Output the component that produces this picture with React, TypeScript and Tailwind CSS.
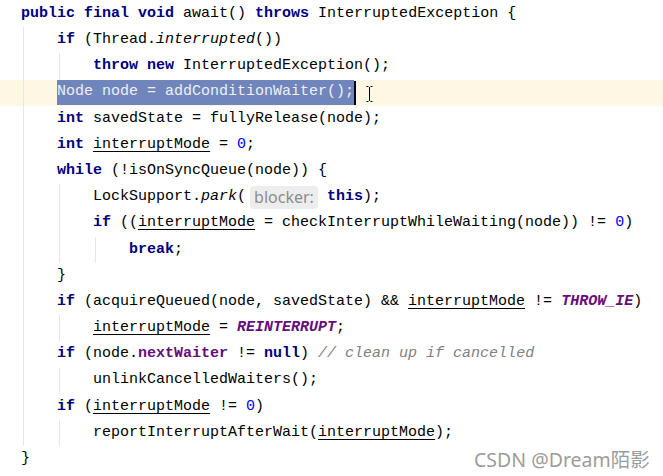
import React from "react";

type Seg = { t: string; k?: "kw" | "it" | "ul" | "num" | "const" | "field" | "cm" | "hint" | "sel" | "caret" };
type Line = { indent: number; segs: Seg[]; current?: boolean };

const kw = (t: string): Seg => ({ t, k: "kw" });
const p = (t: string): Seg => ({ t });
const it = (t: string): Seg => ({ t, k: "it" });
const ul = (t: string): Seg => ({ t, k: "ul" });
const num = (t: string): Seg => ({ t, k: "num" });
const cst = (t: string): Seg => ({ t, k: "const" });

const lines: Line[] = [
  { indent: 0, segs: [kw("public"), p(" "), kw("final"), p(" "), kw("void"), p(" await() "), kw("throws"), p(" InterruptedException {")] },
  { indent: 1, segs: [kw("if"), p(" (Thread."), it("interrupted"), p("())")] },
  { indent: 2, segs: [kw("throw"), p(" "), kw("new"), p(" InterruptedException();")] },
  { indent: 1, current: true, segs: [{ t: "Node node = addConditionWaiter();", k: "sel" }, { t: "", k: "caret" }] },
  { indent: 1, segs: [kw("int"), p(" savedState = fullyRelease(node);")] },
  { indent: 1, segs: [kw("int"), p(" "), ul("interruptMode"), p(" = "), num("0"), p(";")] },
  { indent: 1, segs: [kw("while"), p(" (!isOnSyncQueue(node)) {")] },
  { indent: 2, segs: [p("LockSupport."), it("park"), p("("), { t: "blocker:", k: "hint" }, p(" "), kw("this"), p(");")] },
  { indent: 2, segs: [kw("if"), p(" (("), ul("interruptMode"), p(" = checkInterruptWhileWaiting(node)) != "), num("0"), p(")")] },
  { indent: 3, segs: [kw("break"), p(";")] },
  { indent: 1, segs: [p("}")] },
  { indent: 1, segs: [kw("if"), p(" (acquireQueued(node, savedState) && "), ul("interruptMode"), p(" != "), cst("THROW_IE"), p(")")] },
  { indent: 2, segs: [ul("interruptMode"), p(" = "), cst("REINTERRUPT"), p(";")] },
  { indent: 1, segs: [kw("if"), p(" (node."), { t: "nextWaiter", k: "field" }, p(" != "), kw("null"), p(") "), { t: "// clean up if cancelled", k: "cm" }] },
  { indent: 2, segs: [p("unlinkCancelledWaiters();")] },
  { indent: 1, segs: [kw("if"), p(" ("), ul("interruptMode"), p(" != "), num("0"), p(")")] },
  { indent: 2, segs: [p("reportInterruptAfterWait("), ul("interruptMode"), p(");")] },
  { indent: 0, segs: [p("}")] },
];

function renderSeg(s: Seg, i: number) {
  switch (s.k) {
    case "kw":
      return <span key={i} className="font-bold text-[#000080]">{s.t}</span>;
    case "it":
      return <span key={i} className="italic">{s.t}</span>;
    case "ul":
      return <span key={i} className="underline decoration-1 underline-offset-[3px]">{s.t}</span>;
    case "num":
      return <span key={i} className="text-[#0000ff]">{s.t}</span>;
    case "const":
      return <span key={i} className="font-bold italic text-[#660e7a]">{s.t}</span>;
    case "field":
      return <span key={i} className="font-bold text-[#660e7a]">{s.t}</span>;
    case "cm":
      return <span key={i} className="italic text-[#808080]">{s.t}</span>;
    case "hint":
      return (
        <span
          key={i}
          className="ml-[4px] inline-flex h-[23px] items-center rounded-[4px] bg-[#ededed] px-[4px] text-[16px] text-[#8c8c8c]"
          style={{ fontFamily: '"Noto Sans", "Open Sans", sans-serif' }}
        >
          {s.t}
        </span>
      );
    case "sel":
      return (
        <span key={i} className="flex h-[25px] items-center bg-[#7085bb] text-[#eef0f8]">
          {s.t}
        </span>
      );
    case "caret":
      return (
        <React.Fragment key={i}>
          <span className="h-[24px] w-[2px] bg-black" />
          <svg className="ml-[10px] mt-[2px]" width="7" height="16" viewBox="0 0 7 16" fill="none" stroke="#000" strokeWidth="1">
            <path d="M0.5 0.5H2.5M4.5 0.5H6.5M3.5 1V15M0.5 15.5H2.5M4.5 15.5H6.5" />
          </svg>
        </React.Fragment>
      );
    default:
      return <span key={i}>{s.t}</span>;
  }
}

export default function App() {
  return (
    <div className="relative h-[476px] w-[663px] overflow-hidden bg-white">
      <div
        className="mt-[1px] flex flex-col text-[15px] text-black"
        style={{ fontFamily: '"Liberation Mono", "DejaVu Sans Mono", monospace' }}
      >
        {lines.map((ln, li) => (
          <div
            key={li}
            className={`flex h-[26.2px] items-center whitespace-pre pl-[21px] ${ln.current ? "bg-[#fdf8e4]" : ""}`}
          >
            {Array.from({ length: ln.indent }).map((_, j) => (
              <span key={j} className="flex h-full w-[36px] shrink-0">
                <span className="ml-[2px] h-full w-px bg-[#e6e6e6]" />
              </span>
            ))}
            {ln.segs.map(renderSeg)}
          </div>
        ))}
      </div>
      <div
        className="absolute left-[474px] top-[446px] text-[19.5px] leading-[28px] text-[#9c9c9c]"
        style={{ fontFamily: '"Noto Sans", "Noto Sans CJK SC", sans-serif' }}
      >
        CSDN @Dream陌影
      </div>
    </div>
  );
}
